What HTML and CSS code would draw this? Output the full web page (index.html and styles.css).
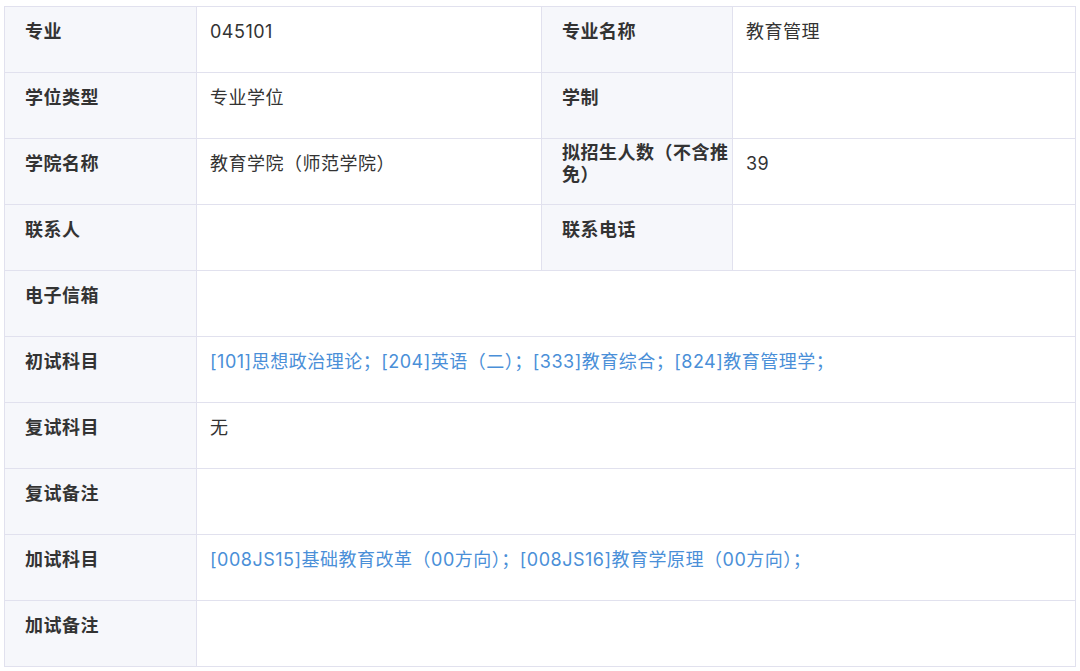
FILE: index.html
```html
<!DOCTYPE html>
<html lang="zh-CN">
<head>
<meta charset="utf-8">
<title>专业信息</title>
<link rel="stylesheet" href="styles.css">
</head>
<body>
<div class="info-table">
  <div class="cell label">专业</div>
  <div class="cell value">045101</div>
  <div class="cell label">专业名称</div>
  <div class="cell value">教育管理</div>

  <div class="cell label">学位类型</div>
  <div class="cell value">专业学位</div>
  <div class="cell label">学制</div>
  <div class="cell value"></div>

  <div class="cell label">学院名称</div>
  <div class="cell value">教育学院（师范学院）</div>
  <div class="cell label">拟招生人数（不含推免）</div>
  <div class="cell value">39</div>

  <div class="cell label">联系人</div>
  <div class="cell value"></div>
  <div class="cell label">联系电话</div>
  <div class="cell value"></div>

  <div class="cell label">电子信箱</div>
  <div class="cell value wide"></div>

  <div class="cell label">初试科目</div>
  <div class="cell value wide link">[101]思想政治理论；[204]英语（二）；[333]教育综合；[824]教育管理学；</div>

  <div class="cell label">复试科目</div>
  <div class="cell value wide">无</div>

  <div class="cell label">复试备注</div>
  <div class="cell value wide"></div>

  <div class="cell label">加试科目</div>
  <div class="cell value wide link">[008JS15]基础教育改革（00方向）；[008JS16]教育学原理（00方向）；</div>

  <div class="cell label">加试备注</div>
  <div class="cell value wide"></div>
</div>
</body>
</html>
```
FILE: styles.css
```css
html, body {
  margin: 0;
  padding: 0;
  background: #ffffff;
}

body {
  padding: 6px 0 0 4px;
  font-family: Inter, "Noto Sans CJK SC", "Noto Sans", sans-serif;
  font-size: 18px;
  letter-spacing: 0.5px;
  color: #333333;
}

.info-table {
  display: grid;
  grid-template-columns: 191px 344px 190px 342px;
  grid-auto-rows: 65px;
  gap: 1px;
  padding: 1px;
  width: max-content;
  background: #e1e1ee;
}

.cell {
  display: flex;
  align-items: center;
  box-sizing: border-box;
  padding: 3px 0 18px 20px;
  line-height: 22px;
  background: #ffffff;
}

.label {
  background: #f6f7fb;
  font-weight: 700;
  color: #333333;
}

.value {
  padding-left: 13px;
  font-weight: 400;
  color: #333333;
}

.wide {
  grid-column: span 3;
}

.link {
  color: #4a8fd8;
}
```
